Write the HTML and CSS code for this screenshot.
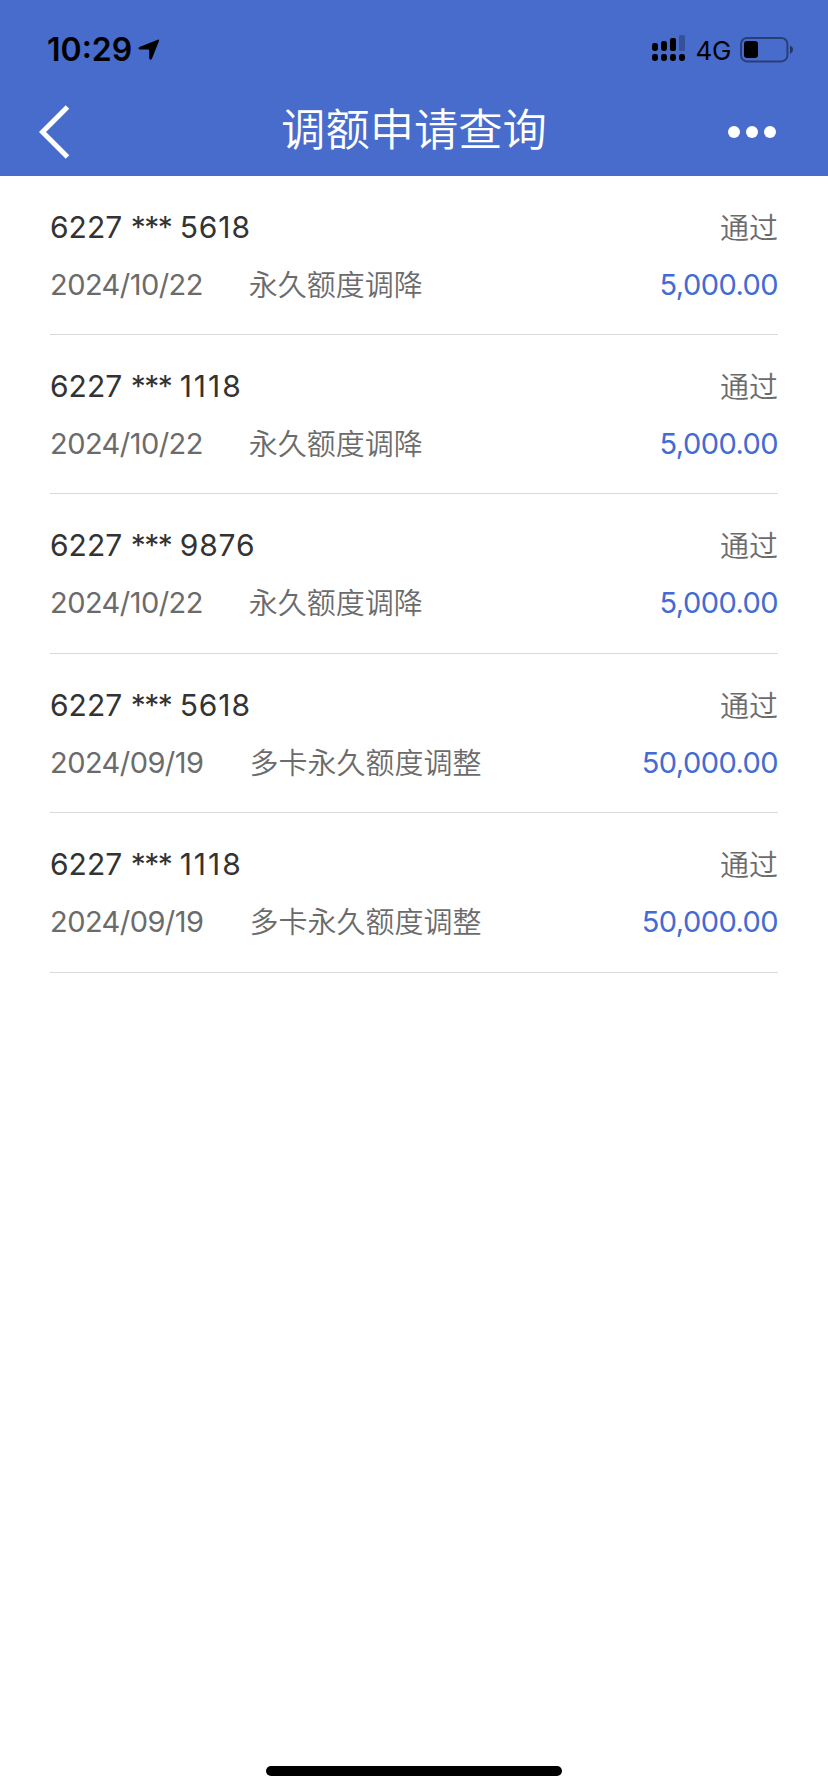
FILE: index.html
```html
<!DOCTYPE html>
<html lang="zh-CN">
<head>
  <meta charset="UTF-8" />
  <meta name="viewport" content="width=device-width, initial-scale=1.0"/>
  <title>调额申请查询</title>
  <link rel="stylesheet" href="styles.css">
</head>
<body>
  <header>
    <div class="status-bar">
      <div class="status-left">
        <span class="time">10:29</span>
        <svg class="location" width="22" height="22" viewBox="0 0 22 22">
          <path d="M19.8 0.7 Q21.6 0.2 21 2 L14 19.5 Q13.2 21 12.2 20.6 Q11.2 20.3 11.2 19 V11.5 Q11.2 10.6 10.4 10.6 H2.2 Q0.5 10.5 0.5 9.3 Q0.5 8.4 2 7.7 Z"/>
        </svg>
      </div>
      <div class="status-right">
        <svg class="signal" width="34" height="28" viewBox="0 0 34 28">
          <rect x="0" y="8" width="6" height="8" rx="2.4"/>
          <rect x="9" y="6" width="6" height="10" rx="2.4"/>
          <rect x="18" y="3" width="6" height="13" rx="2"/>
          <rect x="27" y="0" width="6" height="16" rx="1.5" opacity="0.25"/>
          <rect x="0" y="19" width="6" height="7" rx="2.4"/>
          <rect x="9" y="19" width="6" height="7" rx="2.4"/>
          <rect x="18" y="19" width="6" height="7" rx="2.4"/>
          <rect x="27" y="19" width="6" height="7" rx="2.4"/>
        </svg>
        <span class="network">4G</span>
        <svg class="battery" width="54" height="26" viewBox="0 0 54 26">
          <rect x="1" y="1" width="46.4" height="23.4" rx="6" fill="none" stroke="#000" stroke-width="2" opacity="0.42"/>
          <rect x="4" y="4" width="14" height="17" rx="3"/>
          <path d="M50 8.5 Q53 9.8 53 12.7 Q53 15.6 50 17 Z" opacity="0.5"/>
        </svg>
      </div>
    </div>
    <nav class="nav-bar">
      <svg class="back" width="32" height="54" viewBox="0 0 32 54">
        <path d="M28.5 2 L3.5 27 L28.5 52" fill="none" stroke="#fff" stroke-width="5"/>
      </svg>
      <h1>调额申请查询</h1>
      <div class="more"><i></i><i></i><i></i></div>
    </nav>
  </header>

  <main class="records">
    <div class="record">
      <div class="line"><span class="card">6227 <span class="mask">***</span> <span class="tail">5618</span></span><span class="state">通过</span></div>
      <div class="line"><span class="date">2024/10/22</span><span class="type">永久额度调降</span><span class="amount">5,000.00</span></div>
    </div>
    <div class="record">
      <div class="line"><span class="card">6227 <span class="mask">***</span> <span class="tail wide">1118</span></span><span class="state">通过</span></div>
      <div class="line"><span class="date">2024/10/22</span><span class="type">永久额度调降</span><span class="amount">5,000.00</span></div>
    </div>
    <div class="record">
      <div class="line"><span class="card">6227 <span class="mask">***</span> <span class="tail">9876</span></span><span class="state">通过</span></div>
      <div class="line"><span class="date">2024/10/22</span><span class="type">永久额度调降</span><span class="amount">5,000.00</span></div>
    </div>
    <div class="record">
      <div class="line"><span class="card">6227 <span class="mask">***</span> <span class="tail">5618</span></span><span class="state">通过</span></div>
      <div class="line"><span class="date">2024/09/19</span><span class="type">多卡永久额度调整</span><span class="amount">50,000.00</span></div>
    </div>
    <div class="record">
      <div class="line"><span class="card">6227 <span class="mask">***</span> <span class="tail wide">1118</span></span><span class="state">通过</span></div>
      <div class="line"><span class="date">2024/09/19</span><span class="type">多卡永久额度调整</span><span class="amount">50,000.00</span></div>
    </div>
  </main>

  <footer>
    <div class="home-indicator"></div>
  </footer>
</body>
</html>
```
FILE: styles.css
```css
:root {
  --primary: #486ccc;
  --amount: #446bd2;
  --text: #333;
  --muted: #6b6b6b;
  --line: #d9d9d9;
}

* {
  box-sizing: border-box;
}

body {
  margin: 0;
  min-height: 100vh;
  display: flex;
  flex-direction: column;
  font-family: Inter, "Noto Sans CJK SC", sans-serif;
  background: #fff;
  color: var(--text);
}

header {
  height: 176px;
  background: var(--primary);
}

.status-bar {
  height: 88px;
  padding: 12px 34px 0 47px;
  display: flex;
  justify-content: space-between;
  align-items: center;
  color: #000;
}

.status-left,
.status-right {
  display: flex;
  align-items: center;
}

.time {
  font-size: 32px;
  font-weight: 600;
  line-height: 40px;
}

.location {
  margin-left: 6px;
}

.signal {
  margin-bottom: 2px;
}

.network {
  margin-left: 9px;
  font-size: 26px;
  letter-spacing: -0.3px;
}

.battery {
  margin-left: 9px;
}

.nav-bar {
  height: 88px;
  padding: 0 52px 0 39px;
  display: grid;
  grid-template-columns: 48px 1fr 48px;
  align-items: center;
}

.nav-bar h1 {
  margin: 0;
  padding: 0 0 4px 13px;
  text-align: center;
  color: #fff;
  font-size: 44.3px;
  font-weight: 350;
  line-height: 84px;
}

.more {
  display: flex;
  gap: 6px;
}

.more i {
  width: 12px;
  height: 12px;
  border-radius: 50%;
  background: #fff;
}

.records {
  flex: 1;
  padding: 0 50px;
}

.record {
  height: 159.4px;
  padding-top: 22px;
  border-bottom: 1px solid var(--line);
}

.record:first-child {
  height: 159px;
}

.line {
  height: 58px;
  display: flex;
  align-items: center;
  font-size: 29px;
  line-height: 58px;
  color: var(--muted);
}

.card {
  font-size: 30px;
  color: var(--text);
}

.mask {
  letter-spacing: -1.5px;
}

.tail {
  letter-spacing: 0.9px;
}

.tail.wide {
  letter-spacing: 2px;
}

.state,
.amount {
  margin-left: auto;
}

.state,
.type {
  font-weight: 350;
}

.state {
  padding-top: 4px;
}

.type {
  padding-top: 2px;
  margin-left: 46px;
}

.date,
.amount {
  letter-spacing: -0.55px;
}

.amount {
  color: var(--amount);
}

footer {
  height: 26px;
  display: flex;
  justify-content: center;
}

.home-indicator {
  width: 296px;
  height: 10px;
  border-radius: 5px;
  background: #000;
}
```
